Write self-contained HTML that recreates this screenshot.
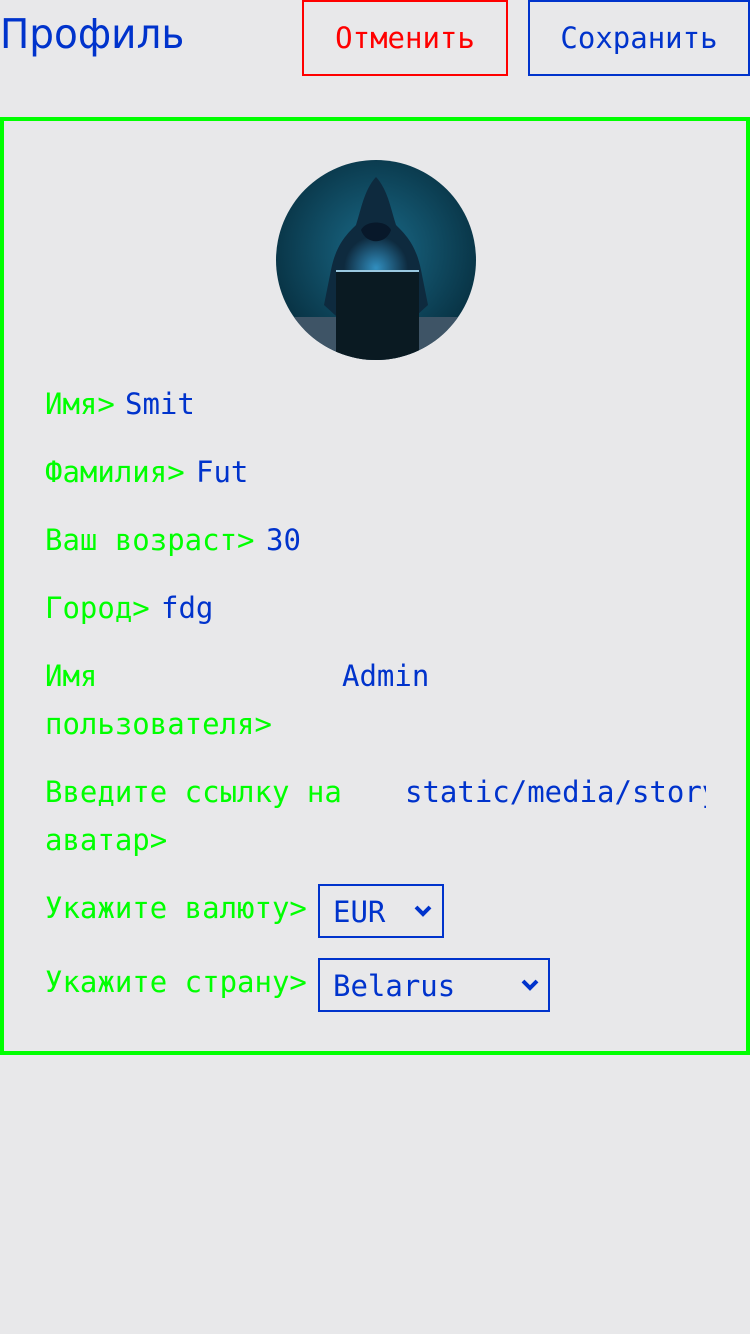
<!DOCTYPE html>
<html><head><meta charset="utf-8"><style>
*{margin:0;padding:0;box-sizing:border-box}
body{width:750px;height:1334px;background:#e8e8ea;position:relative;overflow:hidden;font-family:"DejaVu Sans Mono","Liberation Mono",monospace;font-size:29px}
.a{position:absolute;white-space:nowrap;line-height:48px}
.g{color:#00ff00}.b{color:#0033cc}
.btn{position:absolute;top:0;height:76px;border:2px solid;line-height:72px;text-align:center;font-size:29px}
.sel{position:absolute;border:2px solid #0033cc;color:#0033cc;left:318px;padding-left:13px;line-height:52px}
.chev{position:absolute;top:18px}
</style></head><body>
<div class="a b" style="left:0;top:10px;font-family:'DejaVu Sans',sans-serif;font-size:41px;line-height:48px;transform:scaleX(0.95);transform-origin:0 0">Профиль</div>
<div class="btn" style="left:302px;width:206px;border-color:#ff0000;color:#ff0000">Отменить</div>
<div class="btn" style="left:528px;width:222px;border-color:#0033cc;color:#0033cc">Сохранить</div>
<div style="position:absolute;left:0;top:117px;width:750px;height:938px;border:4px solid #00ff00"></div>
<svg style="position:absolute;left:276px;top:160px" width="200" height="200" viewBox="0 0 200 200">
<defs><clipPath id="c"><circle cx="100" cy="100" r="100"/></clipPath>
<radialGradient id="bg" cx="50%" cy="45%" r="60%"><stop offset="0" stop-color="#1a6a88"/><stop offset="1" stop-color="#062c3c"/></radialGradient>
<radialGradient id="gl" cx="50%" cy="60%" r="40%"><stop offset="0" stop-color="#3aa8e0" stop-opacity=".8"/><stop offset="1" stop-color="#3aa8e0" stop-opacity="0"/></radialGradient></defs>
<g clip-path="url(#c)">
<rect width="200" height="200" fill="url(#bg)"/>
<rect y="157" width="200" height="43" fill="#3e5466"/>
<path d="M100 17 C88 30 85 50 80 65 C70 75 60 85 55 110 L48 145 L70 165 L130 165 L152 145 L145 110 C140 85 130 75 120 65 C115 50 112 30 100 17Z" fill="#0e2a3e"/>
<ellipse cx="100" cy="100" rx="40" ry="40" fill="url(#gl)"/>
<path d="M85 70 C90 85 110 85 115 70 C110 60 90 60 85 70Z" fill="#08182a"/>
<rect x="60" y="110" width="83" height="95" fill="#0a1a22"/>
<rect x="60" y="110" width="83" height="2" fill="#9ac8e0"/>
</g></svg>
<div class="a g" style="left:45px;top:380px">Имя&gt;</div><div class="a b" style="left:125px;top:380px">Smit</div>
<div class="a g" style="left:45px;top:448px">Фамилия&gt;</div><div class="a b" style="left:196px;top:448px">Fut</div>
<div class="a g" style="left:45px;top:516px">Ваш возраст&gt;</div><div class="a b" style="left:266px;top:516px">30</div>
<div class="a g" style="left:45px;top:584px">Город&gt;</div><div class="a b" style="left:161px;top:584px">fdg</div>
<div class="a g" style="left:45px;top:652px">Имя<br>пользователя&gt;</div><div class="a b" style="left:342px;top:652px">Admin</div>
<div class="a g" style="left:45px;top:768px">Введите ссылку на<br>аватар&gt;</div><div class="a b" style="left:405px;top:768px;width:301px;overflow:hidden">static/media/story.jpg</div>
<div class="a g" style="left:45px;top:884px">Укажите валюту&gt;</div>
<div class="sel" style="top:884px;width:126px;height:54px">EUR<svg class="chev" style="left:94px" width="18" height="14" viewBox="0 0 18 14"><path d="M2 3l7 7 7-7" stroke="#0033cc" stroke-width="4" fill="none"/></svg></div>
<div class="a g" style="left:45px;top:958px">Укажите страну&gt;</div>
<div class="sel" style="top:958px;width:232px;height:54px">Belarus<svg class="chev" style="left:201px" width="18" height="14" viewBox="0 0 18 14"><path d="M2 3l7 7 7-7" stroke="#0033cc" stroke-width="4" fill="none"/></svg></div>
</body></html>
